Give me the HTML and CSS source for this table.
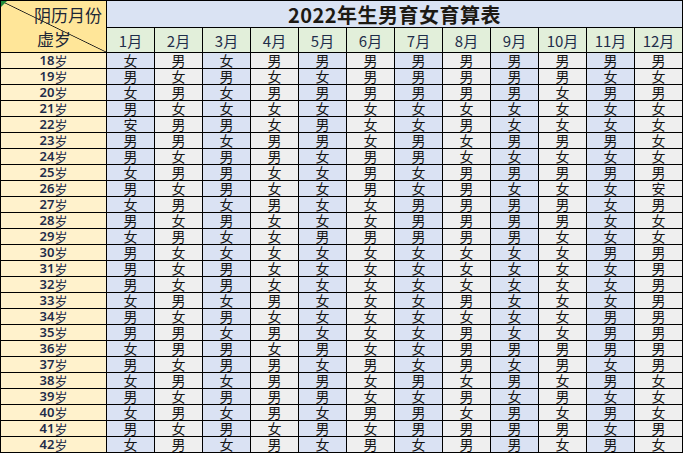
FILE: index.html
```html
<!DOCTYPE html>
<html lang="zh-CN">
<head>
<meta charset="utf-8">
<title>2022年生男育女育算表</title>
<link rel="stylesheet" href="styles.css">
</head>
<body>
<div class="sheet">
  <div class="head">
    <div class="corner"><span class="c-top">阴历月份</span><span class="c-bot">虚岁</span></div>
    <div class="title">2022年生男育女育算表</div>
    <div class="m">1月</div><div class="m">2月</div><div class="m">3月</div><div class="m">4月</div><div class="m">5月</div><div class="m">6月</div><div class="m">7月</div><div class="m">8月</div><div class="m">9月</div><div class="m">10月</div><div class="m">11月</div><div class="m">12月</div>
  </div>
  <div class="row"><div><b>18</b>岁</div><div>女</div><div>男</div><div>女</div><div>男</div><div>男</div><div>男</div><div>男</div><div>男</div><div>男</div><div>男</div><div>男</div><div>男</div></div>
  <div class="row"><div><b>19</b>岁</div><div>男</div><div>女</div><div>男</div><div>女</div><div>女</div><div>男</div><div>男</div><div>男</div><div>男</div><div>男</div><div>女</div><div>女</div></div>
  <div class="row"><div><b>20</b>岁</div><div>女</div><div>男</div><div>女</div><div>男</div><div>男</div><div>男</div><div>男</div><div>男</div><div>男</div><div>女</div><div>男</div><div>男</div></div>
  <div class="row"><div><b>21</b>岁</div><div>男</div><div>女</div><div>女</div><div>女</div><div>女</div><div>女</div><div>女</div><div>女</div><div>女</div><div>女</div><div>女</div><div>女</div></div>
  <div class="row"><div><b>22</b>岁</div><div>安</div><div>男</div><div>男</div><div>女</div><div>男</div><div>女</div><div>女</div><div>男</div><div>女</div><div>女</div><div>女</div><div>女</div></div>
  <div class="row"><div><b>23</b>岁</div><div>男</div><div>男</div><div>女</div><div>男</div><div>男</div><div>女</div><div>男</div><div>女</div><div>男</div><div>男</div><div>男</div><div>女</div></div>
  <div class="row"><div><b>24</b>岁</div><div>男</div><div>女</div><div>男</div><div>男</div><div>女</div><div>男</div><div>男</div><div>女</div><div>女</div><div>女</div><div>女</div><div>女</div></div>
  <div class="row"><div><b>25</b>岁</div><div>女</div><div>男</div><div>男</div><div>女</div><div>女</div><div>男</div><div>女</div><div>男</div><div>男</div><div>男</div><div>男</div><div>男</div></div>
  <div class="row"><div><b>26</b>岁</div><div>男</div><div>女</div><div>男</div><div>女</div><div>女</div><div>男</div><div>女</div><div>男</div><div>女</div><div>女</div><div>女</div><div>安</div></div>
  <div class="row"><div><b>27</b>岁</div><div>女</div><div>男</div><div>女</div><div>男</div><div>女</div><div>女</div><div>男</div><div>男</div><div>男</div><div>男</div><div>女</div><div>男</div></div>
  <div class="row"><div><b>28</b>岁</div><div>男</div><div>女</div><div>男</div><div>女</div><div>女</div><div>女</div><div>男</div><div>男</div><div>男</div><div>男</div><div>女</div><div>女</div></div>
  <div class="row"><div><b>29</b>岁</div><div>女</div><div>男</div><div>女</div><div>女</div><div>男</div><div>男</div><div>男</div><div>男</div><div>男</div><div>女</div><div>女</div><div>女</div></div>
  <div class="row"><div><b>30</b>岁</div><div>男</div><div>女</div><div>女</div><div>女</div><div>女</div><div>女</div><div>女</div><div>女</div><div>女</div><div>女</div><div>男</div><div>男</div></div>
  <div class="row"><div><b>31</b>岁</div><div>男</div><div>女</div><div>男</div><div>女</div><div>女</div><div>女</div><div>女</div><div>女</div><div>女</div><div>女</div><div>女</div><div>男</div></div>
  <div class="row"><div><b>32</b>岁</div><div>男</div><div>女</div><div>男</div><div>女</div><div>女</div><div>女</div><div>女</div><div>女</div><div>女</div><div>女</div><div>女</div><div>男</div></div>
  <div class="row"><div><b>33</b>岁</div><div>女</div><div>男</div><div>女</div><div>男</div><div>女</div><div>女</div><div>女</div><div>男</div><div>女</div><div>女</div><div>女</div><div>男</div></div>
  <div class="row"><div><b>34</b>岁</div><div>男</div><div>女</div><div>男</div><div>女</div><div>女</div><div>女</div><div>女</div><div>女</div><div>女</div><div>女</div><div>男</div><div>男</div></div>
  <div class="row"><div><b>35</b>岁</div><div>男</div><div>男</div><div>女</div><div>男</div><div>女</div><div>女</div><div>女</div><div>男</div><div>女</div><div>女</div><div>男</div><div>男</div></div>
  <div class="row"><div><b>36</b>岁</div><div>女</div><div>男</div><div>男</div><div>女</div><div>男</div><div>女</div><div>女</div><div>男</div><div>男</div><div>男</div><div>男</div><div>男</div></div>
  <div class="row"><div><b>37</b>岁</div><div>男</div><div>女</div><div>男</div><div>男</div><div>女</div><div>男</div><div>女</div><div>男</div><div>女</div><div>男</div><div>女</div><div>男</div></div>
  <div class="row"><div><b>38</b>岁</div><div>女</div><div>男</div><div>女</div><div>男</div><div>男</div><div>女</div><div>男</div><div>女</div><div>男</div><div>女</div><div>男</div><div>女</div></div>
  <div class="row"><div><b>39</b>岁</div><div>男</div><div>女</div><div>男</div><div>男</div><div>男</div><div>女</div><div>女</div><div>男</div><div>女</div><div>男</div><div>女</div><div>女</div></div>
  <div class="row"><div><b>40</b>岁</div><div>女</div><div>男</div><div>女</div><div>男</div><div>女</div><div>男</div><div>男</div><div>女</div><div>男</div><div>女</div><div>男</div><div>女</div></div>
  <div class="row"><div><b>41</b>岁</div><div>男</div><div>女</div><div>男</div><div>女</div><div>男</div><div>女</div><div>男</div><div>男</div><div>男</div><div>男</div><div>女</div><div>男</div></div>
  <div class="row"><div><b>42</b>岁</div><div>女</div><div>男</div><div>女</div><div>男</div><div>女</div><div>男</div><div>女</div><div>男</div><div>男</div><div>女</div><div>男</div><div>女</div></div>
</div>
</body>
</html>
```
FILE: styles.css
```css
* { box-sizing: border-box; }
html, body { margin: 0; padding: 0; background: #fff; }
body {
  font-family: "Noto Sans CJK SC", "Noto Sans", sans-serif;
  color: #111;
}
.sheet {
  width: 683px;
  height: 453px;
  border: 1px solid #000;
  background: #000;
  display: flex;
  flex-direction: column;
  gap: 1px;
}
.head {
  display: grid;
  grid-template-columns: 105px repeat(12, 47px);
  grid-template-rows: 26px 24px;
  gap: 1px;
  height: 51px;
  flex: none;
}
.corner {
  grid-row: 1 / 3;
  grid-column: 1;
  position: relative;
  background-color: #ffe699;
  background-image: linear-gradient(to top right, transparent calc(50% - 0.8px), #1a1a1a 50%, transparent calc(50% + 0.8px));
  font-size: 17px;
  line-height: 22px;
  color: #1c2636;
  white-space: nowrap;
  display: flex;
  flex-direction: column;
  justify-content: space-between;
  padding: 3px 4px 2px 0;
}
.corner::before {
  content: "";
  position: absolute;
  left: 0;
  top: 0;
  border-top: 6px solid #1f8a3a;
  border-right: 6px solid transparent;
}
.c-top { align-self: flex-end; }
.c-bot { align-self: flex-start; margin-left: 36px; }
.title {
  grid-row: 1;
  grid-column: 2 / 14;
  background: #dae3f3;
  display: flex;
  align-items: center;
  justify-content: center;
  font-weight: bold;
  font-size: 20px;
  color: #1d1a14;
  letter-spacing: 0.5px;
}
.m {
  background: #e2efda;
  display: flex;
  align-items: center;
  justify-content: center;
  font-size: 15px;
  color: #1f2d4a;
}
.row {
  display: grid;
  grid-template-columns: 105px repeat(12, 47px);
  height: 15px;
  flex: none;
  gap: 1px;
}
.row > div {
  display: flex;
  align-items: center;
  justify-content: center;
  font-size: 14px;
  line-height: 15px;
  background: #efefef;
  color: #151515;
}
.row > div:nth-child(even) { background: #dae2f3; }
.row > div:first-child {
  background: #fff2cc;
  font-size: 13px;
  color: #1f2d4a;
}
.row > div:first-child b {
  font-family: "Noto Sans", sans-serif;
  font-weight: 600;
  font-size: 13px;
}
```
